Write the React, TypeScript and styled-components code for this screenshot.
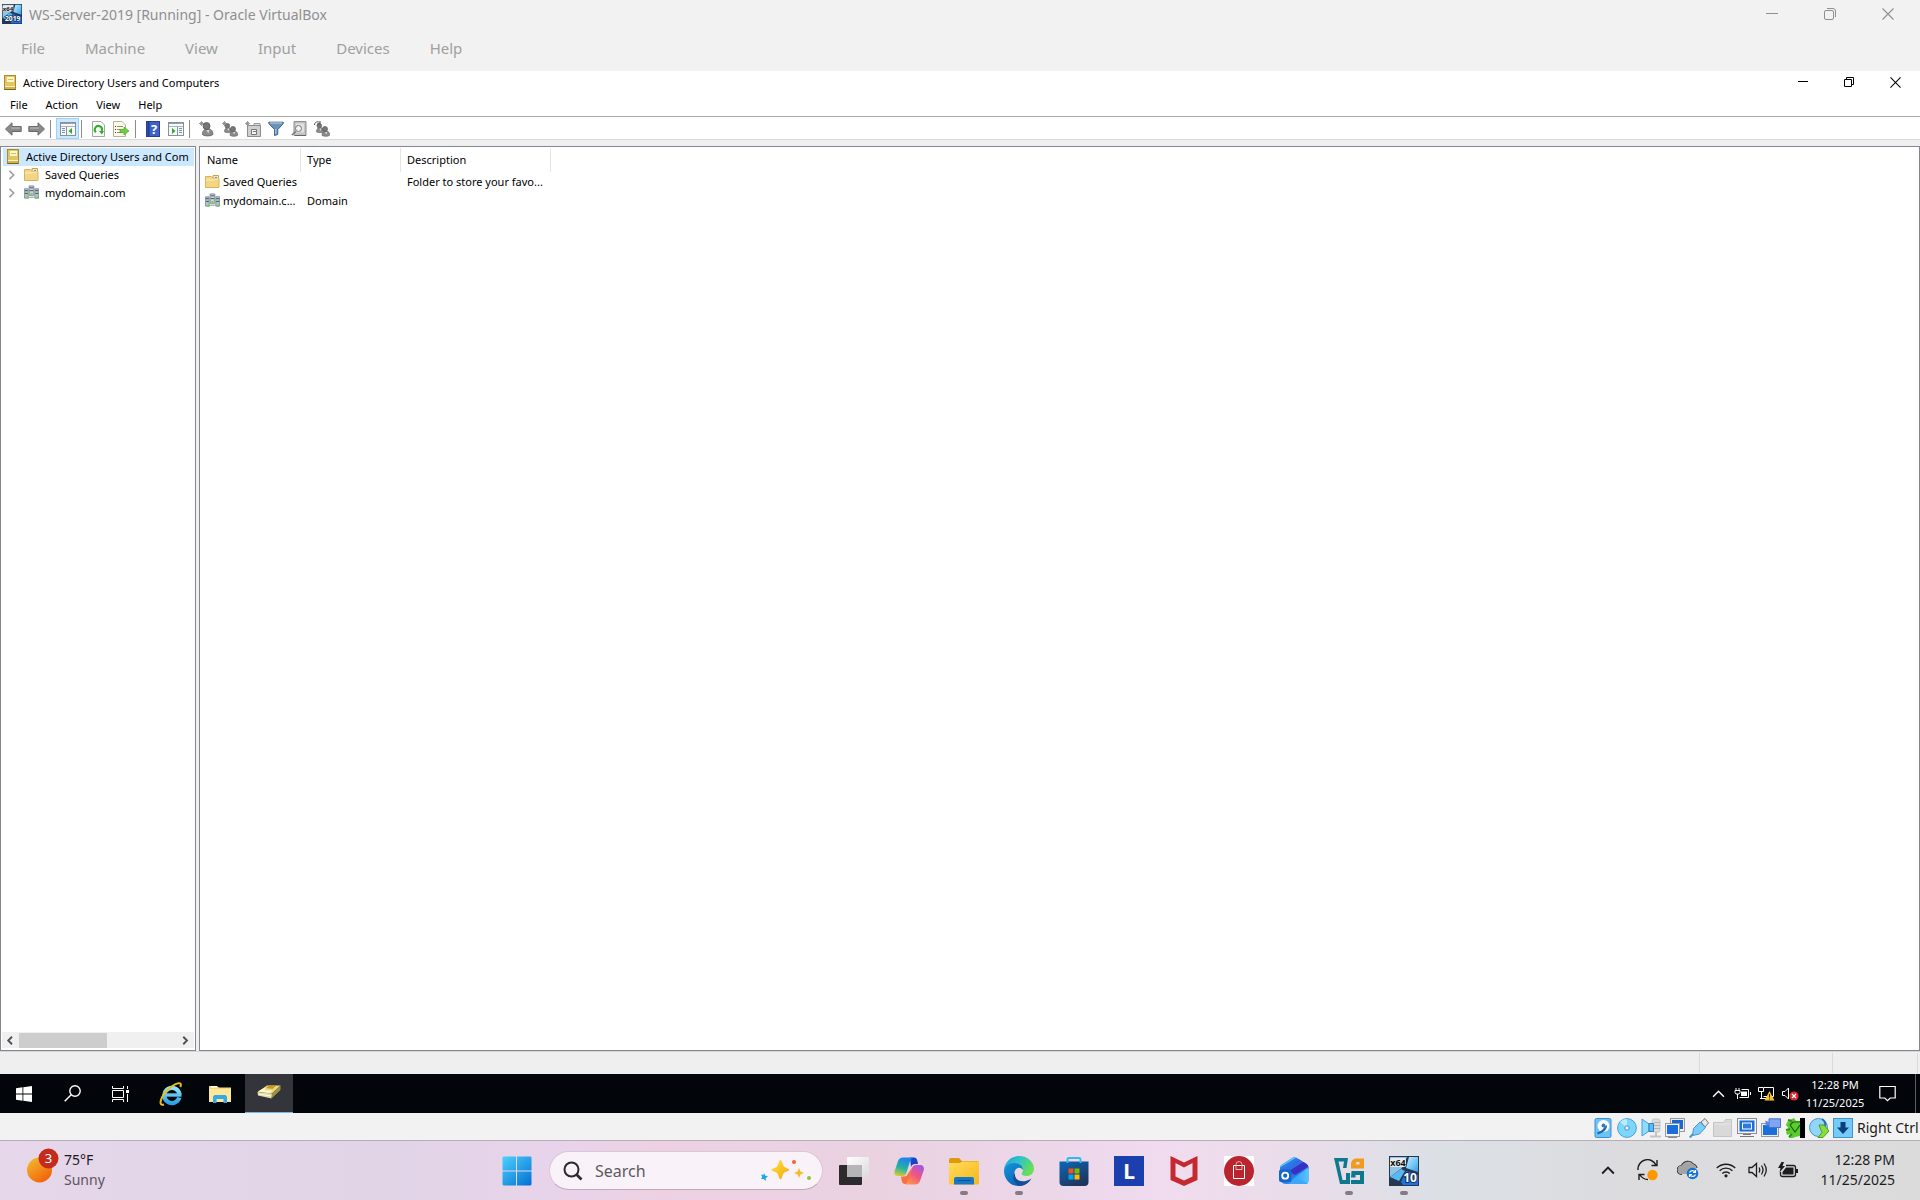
import React from "react";
import styled, { createGlobalStyle, css } from "styled-components";

const Global = createGlobalStyle`
  *, *::before, *::after { box-sizing: border-box; }
  html, body { margin: 0; padding: 0; }
  body { font-family: "Noto Sans", "Open Sans", sans-serif; overflow: hidden; }
  button, input { font: inherit; color: inherit; margin: 0; }
  button { border: 0; background: none; padding: 0; cursor: default; white-space: nowrap; }
  svg { display: block; flex: none; }
`;

/* ---------- layout ---------- */

const Desktop = styled.div`
  display: flex;
  flex-direction: column;
  min-height: 100vh;
  background: #f2f2f2;
`;

const HostTitleBar = styled.header`
  display: flex;
  align-items: center;
  height: 28px;
  padding: 0 3px 0 2px;
  color: #8f8f8f;
`;

const HostTitle = styled.h1`
  flex: 1;
  margin: 0 0 0 7px;
  font-size: 14px;
  font-weight: 400;
`;

const HostMenu = styled.nav`
  display: flex;
  height: 43px;
  padding: 0 0 3px 1px;
  color: #a0a0a0;
  font-size: 15px;
`;

const MenuButton = styled.button<{ $pad: number }>`
  padding: 0 ${(p) => p.$pad}px;
`;

const WindowButton = styled.button<{ $width: number }>`
  display: flex;
  align-items: center;
  justify-content: center;
  width: ${(p) => p.$width}px;
  height: 100%;
`;

const Console = styled.main`
  flex: 1;
  display: flex;
  flex-direction: column;
  background: #efefef;
  color: #000;
  font-size: 11px;
`;

const ConsoleTitleBar = styled.header`
  display: flex;
  align-items: center;
  height: 24px;
  padding: 0 2px 2px 4px;
  background: #fff;
`;

const ConsoleTitle = styled.h2`
  flex: 1;
  margin: 0 0 0 7px;
  font-size: 11px;
  font-weight: 400;
`;

const ConsoleMenu = styled.nav`
  display: flex;
  height: 22px;
  padding: 0 0 2px 1px;
  background: #fff;
  border-bottom: 1px solid #a9a9a9;
`;

const Toolbar = styled.div`
  display: flex;
  align-items: flex-end;
  height: 23px;
  padding-left: 2px;
  background: #fff;
  border-bottom: 1px solid #dadada;
`;

const ToolButton = styled.button<{ $active?: boolean }>`
  display: flex;
  align-items: center;
  justify-content: center;
  width: 23px;
  height: 21px;
  ${(p) =>
    p.$active &&
    css`
      background: #cce8ff;
      box-shadow: inset 0 0 0 1px #99d1ff;
    `}
`;

const ToolSeparator = styled.span`
  width: 1px;
  height: 18px;
  margin: 0 5px 1px 2px;
  background: #8c8c8c;
`;

const Workspace = styled.div`
  flex: 1;
  display: flex;
  gap: 3px;
  padding-top: 6px;
`;

const TreePane = styled.section`
  display: flex;
  flex-direction: column;
  width: 196px;
  padding: 1px 1px 2px;
  background: #fff;
  border: 1px solid #828790;
`;

const Tree = styled.ul`
  flex: 1;
  margin: 0;
  padding: 0 0 0 1px;
  list-style: none;
`;

const TreeRow = styled.li<{ $selected?: boolean }>`
  display: flex;
  align-items: center;
  height: 18px;
  padding: 0 0 2px 4px;
  white-space: nowrap;
  background: ${(p) => (p.$selected ? "#cce8ff" : "transparent")};
`;

const TreeToggle = styled.button`
  width: 10px;
  margin-right: 7px;
  padding-top: 2px;
  color: #a0a0a0;
`;

const TreeLabel = styled.span<{ $root?: boolean }>`
  margin-left: ${(p) => (p.$root ? 7 : 6)}px;
`;

const ScrollBar = styled.div`
  display: flex;
  align-items: center;
  height: 16px;
  background: #f0f0f0;
  color: #505050;
`;

const ScrollArrow = styled.button`
  display: flex;
  align-items: center;
  justify-content: center;
  width: 17px;
  height: 16px;
`;

const ScrollTrack = styled.div`
  flex: 1;
  height: 15px;
`;

const ScrollThumb = styled.div`
  width: 56%;
  height: 100%;
  background: #cdcdcd;
`;

const ListPane = styled.section`
  flex: 1;
  padding: 1px;
  background: #fff;
  border: 1px solid #828790;
`;

const Table = styled.table`
  width: 350px;
  table-layout: fixed;
  border-collapse: separate;
  border-spacing: 0;
`;

const Col = styled.col<{ $width: number }>`
  width: ${(p) => p.$width}px;
`;

const HeadCell = styled.th`
  height: 24px;
  padding: 0 0 2px 6px;
  border-right: 1px solid #e5e5e5;
  font-weight: 400;
  text-align: left;
`;

const Cell = styled.td`
  height: 19px;
  padding: 0 0 0 6px;
  white-space: nowrap;
`;

const NameCell = styled(Cell)`
  padding-left: 4px;
`;

const NameWrap = styled.span`
  display: flex;
  align-items: center;
  gap: 3px;
`;

const ConsoleStatus = styled.footer`
  display: flex;
  justify-content: flex-end;
  height: 23px;
  padding: 1px 2px 1px 0;
  border-top: 1px solid #d7d7d7;
`;

const StatusCell = styled.span<{ $width: number }>`
  width: ${(p) => p.$width}px;
  border-left: 1px solid #d9d9d9;
`;

const StatusEnd = styled.span`
  width: 1px;
  background: #d9d9d9;
`;

/* ---------- guest taskbar ---------- */

const GuestTaskbar = styled.div`
  display: flex;
  height: 39px;
  background: #02050a;
  color: #fff;
`;

const GuestApps = styled.div`
  display: flex;
  gap: 1px;
  margin-left: 3px;
  flex: 1;
`;

const GuestButton = styled.button<{ $active?: boolean }>`
  display: flex;
  align-items: center;
  justify-content: center;
  width: 48px;
  height: 39px;
  background: ${(p) => (p.$active ? "#33353a" : "transparent")};
  border-bottom: ${(p) => (p.$active ? "1px solid #76b9ed" : "0")};
`;

const GuestTray = styled.div`
  display: flex;
  align-items: center;
  padding-right: 4px;
`;

const TrayButton = styled.button<{ $width: number }>`
  display: flex;
  align-items: center;
  justify-content: center;
  width: ${(p) => p.$width}px;
  height: 100%;
`;

const GuestClock = styled.time`
  width: 66px;
  font-size: 11px;
  line-height: 18px;
  text-align: center;
  white-space: nowrap;
`;

const ShowDesktop = styled.button`
  width: 1px;
  height: 100%;
  margin-left: 8px;
  background: #5c5d60;
`;

/* ---------- VirtualBox status ---------- */

const HostStatus = styled.footer`
  display: flex;
  align-items: center;
  justify-content: flex-end;
  gap: 4px;
  height: 27px;
  padding: 2px 2px 0 0;
  color: #1a1a1a;
  font-size: 14px;
`;

const HostKey = styled.span`
  width: 61px;
  white-space: nowrap;
`;

/* ---------- host taskbar ---------- */

const HostTaskbar = styled.div`
  display: grid;
  grid-template-columns: 1fr auto 1fr;
  height: 60px;
  border-top: 1px solid #b5adb8;
  color: #1c1c1c;
  font-size: 14px;
  background: linear-gradient(
    90deg,
    #e6d7ea 0%,
    #e1d4e7 20%,
    #e8d4ea 29%,
    #edd1e3 34%,
    #ead2e1 46%,
    #ecd8ea 56%,
    #f0dcee 61%,
    #e9dde9 68%,
    #dbe0e5 75%,
    #dcdbde 86%,
    #dbdbdc 100%
  );
`;

const Weather = styled.button`
  display: flex;
  align-items: center;
  gap: 5px;
  height: 56px;
  padding-left: 26px;
  text-align: left;
  line-height: 20px;
`;

const WeatherText = styled.span`
  display: flex;
  flex-direction: column;
  padding-top: 1px;
`;

const Muted = styled.span`
  color: #5c5560;
`;

const HostApps = styled.div`
  display: flex;
`;

const AppButton = styled.button<{ $running?: boolean }>`
  display: flex;
  align-items: center;
  justify-content: center;
  flex-direction: column;
  gap: 5px;
  width: 55px;
  height: 57px;
  padding-top: 11px;

  &::after {
    content: "";
    width: 8px;
    height: 4px;
    border-radius: 2px;
    background: ${(p) => (p.$running ? "#857b84" : "transparent")};
  }
`;

const SearchBox = styled.label`
  display: flex;
  align-items: center;
  width: 274px;
  height: 39px;
  margin: 10px 3px 0 5px;
  padding: 0 10px 0 13px;
  border: 1px solid #d9c6d6;
  border-bottom-color: #bda9ba;
  border-radius: 20px;
  background: #f9f2f8;
`;

const SearchInput = styled.input`
  flex: 1;
  min-width: 0;
  margin-left: 12px;
  padding: 0;
  border: 0;
  outline: 0;
  background: transparent;
  font-size: 16px;

  &::placeholder {
    color: #5d5960;
    opacity: 1;
  }
`;

const HostTray = styled.div`
  display: flex;
  align-items: center;
  justify-content: flex-end;
  height: 58px;
  padding-right: 25px;
`;

const HostClock = styled.time`
  width: 91px;
  font-size: 14px;
  line-height: 20px;
  text-align: right;
  white-space: nowrap;
`;

/* ---------- icons ---------- */

const Minimize = ({ size }: { size: number }) => (
  <svg width={size} height="12" viewBox={`0 0 ${size} 12`} aria-hidden="true">
    <path d={`M0 5.5H${size}`} stroke="currentColor" />
  </svg>
);

const Restore = ({ rounded }: { rounded?: boolean }) => (
  <svg width="12" height="12" viewBox="0 0 12 12" fill="none" stroke="currentColor" aria-hidden="true">
    {rounded ? (
      <>
        <rect x=".5" y="2.5" width="9" height="9" rx="1.5" />
        <path d="M3 .5h6a2.500 2.500 0 0 1 2.500 2.500v6" />
      </>
    ) : (
      <path d="M1.500 3.500h7v7h-7zM3.500 3.500v-2h7v7h-2" />
    )}
  </svg>
);

const Close = ({ size }: { size: number }) => (
  <svg width={size} height={size} viewBox="0 0 12 12" fill="none" stroke="currentColor" strokeWidth="1.100" aria-hidden="true">
    <path d="M.5.5l11 11M11.500.5l-11 11" />
  </svg>
);

const VmIcon = ({ size, top, bottom }: { size: number; top: string; bottom: string }) => (
  <svg width={size} height={size} viewBox="0 0 30 30" aria-hidden="true">
    <defs>
      <linearGradient id={`vm${size}`} x1="0" y1="0" x2="1" y2="1">
        <stop offset="0" stopColor="#c9ecfb" />
        <stop offset=".6" stopColor="#6cc4f5" />
        <stop offset="1" stopColor="#3a97ea" />
      </linearGradient>
    </defs>
    <rect width="30" height="30" fill="#26384f" />
    <path d="M1 1h17l-5 11-12 9z" fill="#8fc4e6" />
    <path d="M20 1h9v15l-12-4z" fill={`url(#vm${size})`} />
    <path d="M12 13l4 2-6 10-9-4z" fill="#58b8f0" />
    <path d="M17 15l12 4v10H14l-2-3z" fill="#1c72e4" />
    <rect x="1" y="2" width="16" height="9" rx="2" fill="#e9ecec" />
    <text x="9" y="10" textAnchor="middle" fontSize="9" fontWeight="700" fill="#111">{top}</text>
    <text x={bottom.length > 2 ? 16 : 21} y="26" textAnchor="middle" fontSize={bottom.length > 2 ? 10 : 12} fontWeight="700" fill="#fff" stroke="#17335e" strokeWidth="2" paintOrder="stroke">{bottom}</text>
  </svg>
);

const BookIcon = ({ w, h }: { w: number; h: number }) => (
  <svg width={w} height={h} viewBox="0 0 12 15" aria-hidden="true">
    <rect x=".5" y=".5" width="11" height="14" fill="#d3b44c" stroke="#ab8a30" />
    <path d="M1 1h10v10H1z" fill="#e2c664" />
    <rect x="3" y="2" width="7" height="5" fill="#fff8cf" />
    <path d="M4 4.500h5" stroke="#d6bc62" />
    <path d="M1 11.500h10" stroke="#fff3bf" />
    <path d="M.5 14.500h11" stroke="#7d6118" />
  </svg>
);

const FolderIcon = () => (
  <svg width="15" height="13" viewBox="0 0 15 13" aria-hidden="true">
    <path d="M8 .5h5.500v4H8z" fill="#fbe9ae" stroke="#c8a04c" />
    <path d="M.5 1.500h6l2 2h5.500v9H.5z" fill="#f4d583" stroke="#d9b25c" />
    <path d="M1 5h7l1.500-1h4" stroke="#fdf0c4" fill="none" />
    <path d="M10 2.500h2" stroke="#5b9ad5" />
  </svg>
);

const DomainIcon = () => (
  <svg width="15" height="15" viewBox="0 0 16 15" aria-hidden="true">
    <path d="M5.500.5h5v10h-5z" fill="#c9d3d8" stroke="#7b8c96" />
    <path d="M.5 3.500h4v10h-4zM11.500 3.500h4v10h-4z" fill="#b4c1c8" stroke="#8494a0" />
    <path d="M6 2.500h4M6 5.500h4M1 5.500h3M1 8.500h3M12 5.500h3M12 8.500h3" stroke="#425462" />
    <path d="M3 12h2v2H3zM13 12h2v2h-2zM7 8h2v2H7z" fill="#5ee01d" />
    <path d="M5.500 12.500h5" stroke="#7b8c96" />
  </svg>
);

const Arrow = ({ flip }: { flip?: boolean }) => (
  <svg width="17" height="14" viewBox="0 0 17 14" aria-hidden="true">
    <path
      d={flip ? "M16.500 7L10 .8v3.700H.8v5H10v3.700z" : "M.5 7L7 .8v3.700h9.200v5H7v3.700z"}
      fill="#8b8b8b"
      stroke="#686868"
    />
    <path d={flip ? "M2 6h9" : "M6 6h9"} stroke="#bdbdbd" />
  </svg>
);

const PaneIcon = ({ side }: { side: "left" | "right" }) => (
  <svg width="16" height="14" viewBox="0 0 16 14" aria-hidden="true">
    <rect x=".5" y=".5" width="15" height="13" fill="#f7f8f9" stroke="#87919c" />
    <path d="M1 1.500h14" stroke="#8e9baa" />
    <path d="M1 4.500h14M11 1.500h1M13 1.500h1" stroke="#a9b4c0" />
    {side === "left" ? (
      <>
        <path d="M6.500 5v8" stroke="#87919c" />
        <path d="M2 6.500h3M2 8.500h3M2 10.500h3" stroke="#6f94bd" />
        <path d="M12 6v6L8.500 9z" fill="#33a92c" />
      </>
    ) : (
      <>
        <path d="M9.500 5v8" stroke="#87919c" />
        <path d="M11 6.500h3M11 8.500h3M11 10.500h3" stroke="#6f94bd" />
        <path d="M4 6v6l3.500-3z" fill="#33a92c" />
      </>
    )}
  </svg>
);

const RefreshIcon = () => (
  <svg width="13" height="16" viewBox="0 0 13 16" fill="none" aria-hidden="true">
    <path d="M.5.5H9L12.500 4v11.500H.5z" fill="#fafafa" stroke="#a5a5a5" />
    <path d="M9.700 10A3.600 3.600 0 1 0 4 11.300" stroke="#2fae2b" strokeWidth="2" />
    <path d="M7 10h5l-2.200 3.500z" fill="#2fae2b" />
  </svg>
);

const ExportIcon = () => (
  <svg width="17" height="16" viewBox="0 0 17 16" aria-hidden="true">
    <path d="M.5.5H9L12.500 4v11.500H.5z" fill="#fffbe4" stroke="#b3b09c" />
    <path d="M2 5.500h1M2 8.500h1M2 11.500h1" stroke="#333" />
    <path d="M4 5.500h6M4 8.500h4M4 11.500h5" stroke="#8c8c80" />
    <path d="M7 8.500h4V6l5 4-5 4v-2.500H7z" fill="#6cd13f" stroke="#3ba31f" strokeWidth=".6" />
  </svg>
);

const HelpIcon = () => (
  <svg width="14" height="16" viewBox="0 0 14 16" overflow="visible" aria-hidden="true">
    <rect x=".5" y=".5" width="13" height="15" fill="#3f62c8" stroke="#27408f" />
    <path d="M2.500 1v14" stroke="#243c8c" strokeWidth="2" />
    <text x="8" y="13" textAnchor="middle" fontSize="13" fontWeight="700" fill="#fff">?</text>
  </svg>
);

const Person = ({ x, y, s = 1 }: { x: number; y: number; s?: number }) => (
  <g transform={`translate(${x} ${y}) scale(${s})`}>
    <path d="M0 11c0-4 2-5 4.500-5S9 7 9 11c-2 1.500-7 1.500-9 0z" fill="#8b8b8b" stroke="#6a6a6a" strokeWidth=".8" />
    <circle cx="3.500" cy="3.500" r="3" fill="#777" stroke="#5a5a5a" strokeWidth=".8" />
    <path d="M3.500 7l1.500 3 1-3z" fill="#ddd" />
  </g>
);

const Spark = () => <path d="M2.500 0v5M0 2.500h5M1 1l3.500 3.500M4 1L1 4" stroke="#888" strokeWidth=".8" />;

const UserIcon = () => (
  <svg width="16" height="16" viewBox="0 0 16 16" aria-hidden="true">
    <Person x={3.500} y={1} s={1.150} />
    <Spark />
  </svg>
);

const GroupIcon = ({ add }: { add?: boolean }) => (
  <svg width="16" height="16" viewBox="0 0 16 16" fill="none" aria-hidden="true">
    <Person x={2.500} y={2} s={0.800} />
    <Person x={8} y={5} s={0.850} />
    {add ? <path d="M.5 4c0-3 3-4 5-2.500M6 0v3H3" stroke="#555" /> : <Spark />}
  </svg>
);

const UnitIcon = () => (
  <svg width="16" height="16" viewBox="0 0 16 16" aria-hidden="true">
    <path d="M9 2.500h6v3H9z" fill="#ddd" stroke="#999" />
    <path d="M2.500 4.500h13v11h-13z" fill="#cfcfcf" stroke="#8d8d8d" />
    <path d="M6.500 8.500h5v5h-5z" fill="#f4f4f4" stroke="#777" />
    <path d="M8 10.500h3" stroke="#777" />
    <Spark />
  </svg>
);

const FilterIcon = () => (
  <svg width="16" height="15" viewBox="0 0 16 15" aria-hidden="true">
    <path d="M.8 1.200h14.400v1.500L9.800 8.500v5L6.500 14.500v-6L.8 2.700z" fill="#6a93b8" stroke="#41678a" />
    <path d="M2 2h12" stroke="#bfd6e8" />
    <path d="M7.800 8v5" stroke="#b9d2e6" />
  </svg>
);

const FindIcon = () => (
  <svg width="16" height="16" viewBox="0 0 16 16" fill="none" aria-hidden="true">
    <path d="M3 .5h12v14H3z" fill="#c4c4c4" stroke="#8e8e8e" />
    <path d="M5 2.500h8v9H5z" fill="#e2e2e2" />
    <circle cx="7.500" cy="7.500" r="3" fill="#f2f2f2" stroke="#777" />
    <path d="M5 10.500L.8 14" stroke="#777" strokeWidth="1.600" />
    <path d="M4 14.500h11" stroke="#666" />
  </svg>
);

const Chevron = ({ dir, size = 9, width = 1.500 }: { dir: "left" | "right" | "up"; size?: number; width?: number }) => {
  const d = { left: "M8 1L3 6l5 5", right: "M3 1l5 5-5 5", up: "M1 9l5-5 5 5" }[dir];
  return (
    <svg width={size} height={size} viewBox="0 0 12 12" fill="none" stroke="currentColor" strokeWidth={width} aria-hidden="true">
      <path d={d} />
    </svg>
  );
};

const WinLogo = () => (
  <svg width="16" height="16" viewBox="0 0 16 16" fill="#fff" aria-hidden="true">
    <path d="M0 2.300L6.500 1.300V7.500H0zM7.300 1.200L16 0v7.500H7.300zM0 8.400h6.500v6.300L0 13.800zM7.300 8.400H16V16l-8.700-1.200z" />
  </svg>
);

const GuestSearch = () => (
  <svg width="17" height="17" viewBox="0 0 17 17" fill="none" stroke="#fff" strokeWidth="1.400" aria-hidden="true">
    <circle cx="11" cy="6" r="5.200" />
    <path d="M7.200 9.800L.7 16.300" />
  </svg>
);

const TaskView = () => (
  <svg width="17" height="16" viewBox="0 0 17 16" fill="none" stroke="#fff" aria-hidden="true">
    <path d="M.5 0v2.500h11V0M.5 16v-2.500h11V16M.5 4.500h11v7H.5zM15.500 0v3M15.500 8v8" />
    <path d="M14 4h3v3h-3z" fill="#fff" stroke="none" />
  </svg>
);

const IeIcon = () => (
  <svg width="24" height="24" viewBox="0 0 24 24" fill="none" aria-hidden="true">
    <defs>
      <linearGradient id="ie" x1="0" y1="0" x2="0" y2="1">
        <stop offset="0" stopColor="#8fe3fb" />
        <stop offset="1" stopColor="#2aa3e6" />
      </linearGradient>
    </defs>
    <path d="M20.300 15.500A7.600 7.600 0 1 1 20.500 12.500" stroke="url(#ie)" strokeWidth="4.200" />
    <path d="M7 13h15.500" stroke="#5cc8f3" strokeWidth="3.400" />
    <path d="M5 22.500C-1.500 24.500 2 14 9 7.500S24-1.500 21.300 5" stroke="#eebc1d" strokeWidth="2" />
  </svg>
);

const GuestExplorer = () => (
  <svg width="22" height="18" viewBox="0 0 22 18" aria-hidden="true">
    <path d="M0 1h8l2 1.500h12V17H0z" fill="#f8d775" />
    <path d="M0 4h22v13H0z" fill="#fde79b" />
    <path d="M2 1h6v1.500H2z" fill="#fff" />
    <path d="M4 18v-6.500L5.500 10h11l1.500 1.500V18h-3.500v-4h-7v4z" fill="#35a8e6" />
  </svg>
);

const ConsoleApp = () => (
  <svg width="24" height="18" viewBox="0 0 24 18" aria-hidden="true">
    <path d="M.5 8L10 1.500h13.500L15 9.500z" fill="#e6d77a" />
    <path d="M9 4l3-2.500h7L15.500 5z" fill="#c39a24" />
    <path d="M1 7.500L9 3l-1.500 3 8 .5-2.500 2.500z" fill="#fff9ce" />
    <path d="M.5 8L15 9.500l-.5 5L1 11.500z" fill="#e3dba6" />
    <path d="M15 9.500L23.500 1.500v4.500L14.500 14.500z" fill="#9c9047" />
    <path d="M1.500 10l13 2" stroke="#fffceb" />
  </svg>
);

const GuestPower = () => (
  <svg width="17" height="13" viewBox="0 0 17 13" fill="none" stroke="#fff" aria-hidden="true">
    <path d="M7.500 2.500h7v8H5.500" />
    <path d="M7 4.500h6v4.500H7z" fill="#fff" stroke="none" />
    <path d="M16.500 5v3M2 1v2M5 1v2M1 3.500h5v2L5 7H2L1 5.500zM3.500 7v5" />
  </svg>
);

const GuestNetwork = () => (
  <svg width="17" height="15" viewBox="0 0 17 15" fill="none" stroke="#fff" aria-hidden="true">
    <path d="M6 1.500h9.500v9H5.500M.5 1.500h5v4h-5zM3.500 6v6M2 12.500h7" />
    <path d="M11.500 5L16.500 14.500h-10z" fill="#f7c52b" stroke="none" />
    <path d="M11.500 8v3.500M11.500 12.500v1" stroke="#222" />
  </svg>
);

const GuestSound = () => (
  <svg width="17" height="15" viewBox="0 0 17 15" fill="none" aria-hidden="true">
    <path d="M.5 5.500H3L6.500 2v11L3 9.500H.5z" stroke="#fff" />
    <circle cx="12" cy="10" r="4.600" fill="#d9252e" />
    <path d="M10 8l4 4M14 8l-4 4" stroke="#fff" strokeWidth="1.300" />
  </svg>
);

const ActionCenter = () => (
  <svg width="17" height="17" viewBox="0 0 17 17" fill="none" stroke="#fff" strokeWidth="1.200" aria-hidden="true">
    <path d="M.8 1.500h15.400v11.500h-5L8.500 15.700 5.800 13h-5z" />
  </svg>
);

/* VirtualBox device indicators, in bar order */
const deviceDrawings: { label: string; art: React.ReactNode }[] = [
  {
    label: "Hard disks",
    art: (
      <>
        <rect x="2" y=".5" width="16" height="19" rx="1.500" fill="#6cc4f5" stroke="#3a8fd0" />
        <circle cx="10.500" cy="8" r="6" fill="#fff" />
        <circle cx="10.500" cy="7.500" r="2" fill="#2f7cc4" />
        <path d="M14 7c0 5-3 7-9 9.500l-1-2c4-1 6-3 8-6z" fill="#1c66b4" />
      </>
    ),
  },
  {
    label: "Optical drives",
    art: (
      <>
        <circle cx="10" cy="10" r="9.400" fill="#7bd7fb" stroke="#4c9fd3" />
        <path d="M10 10L3 4a9 9 0 0 1 7-3z" fill="#b5ecff" />
        <circle cx="10" cy="10" r="2.200" fill="#e9f8ff" stroke="#4c86b9" />
      </>
    ),
  },
  {
    label: "Audio",
    art: (
      <>
        <path d="M11 3q0-2 2-2h4q2 0 2 2v9q0 2-2 2h-4q-2 0-2-2z" fill="#dcdcdc" stroke="#c4c4c4" />
        <path d="M9 18.500h11M15 14v4" stroke="#c4c4c4" strokeWidth="2" />
        <path d="M13 4.500h6M13 7.500h6M13 10.500h6" stroke="#b4b4b4" />
        <path d="M1 1l7 5v7l-7 5z" fill="#8fdcfb" stroke="#4a9cd6" />
        <path d="M8 5.500h4.500v8H8z" fill="#5cbcf3" stroke="#2b7fc4" />
      </>
    ),
  },
  {
    label: "Network",
    art: (
      <>
        <rect x="5.500" y=".5" width="14" height="13" fill="#eee" stroke="#9a9a9a" />
        <rect x="7" y="2" width="11" height="9" fill="#1768d2" />
        <rect x=".5" y="5.500" width="14" height="13" fill="#f3f3f3" stroke="#9a9a9a" />
        <rect x="2" y="7" width="11" height="9" fill="#1a6fdc" />
        <path d="M3 19.500h9" stroke="#8a8a8a" />
      </>
    ),
  },
  {
    label: "USB",
    art: (
      <>
        <path d="M12 4l4-3.500L19.500 5 16 9z" fill="#e8e8e8" stroke="#777" />
        <path d="M11 4l5.500 5.500-6 6.500-7 1.500 1-7z" fill="#79cdf8" stroke="#4795cd" />
        <path d="M4 16L.8 19.500" stroke="#4795cd" strokeWidth="2" />
      </>
    ),
  },
  {
    label: "Shared folders",
    art: (
      <>
        <path d="M.5 4.500h10l2-3h6v17H.5z" fill="#d9d9d9" stroke="#c4c4c4" />
        <path d="M1 6h17" stroke="#e6e6e6" />
      </>
    ),
  },
  {
    label: "Display",
    art: (
      <>
        <rect x=".5" y=".5" width="19" height="15" fill="#f4f4f4" stroke="#8f8f8f" />
        <rect x="2.500" y="2.500" width="15" height="11" fill="#1a6fdc" />
        <rect x="5.500" y="5" width="9" height="6" fill="#2b7be0" stroke="#fff" />
        <path d="M3 18.500h14M6 16.500h8" stroke="#777" />
      </>
    ),
  },
  {
    label: "Recording",
    art: (
      <>
        <rect x=".5" y="5.500" width="17" height="13" fill="#eee" stroke="#999" />
        <rect x="2" y="7" width="14" height="10" fill="#1a6fdc" />
        <path d="M8 .8h11.500v8.700H8z" fill="#7ea6f4" stroke="#4872c8" />
        <path d="M4.500 2.500L8 4v3L4.500 8z" fill="#5c87e2" />
      </>
    ),
  },
  {
    label: "CPU",
    art: (
      <>
        <rect x="15" width="5" height="20" fill="#000" />
        <path d="M1 7q1-4 4-5l4-2 2 3h4v15l-5 1-2 1H4l1-4-3 1-1-3 3-3z" fill="#5ccc2c" />
        <path d="M3 2l4 1M1 12l4-1M4 19l3-3" stroke="#2f8f1c" strokeWidth="2" />
        <path d="M5 7l5 7 5-7M8 4h7M5 7l3-3" stroke="#14620c" strokeWidth="1.200" fill="none" />
      </>
    ),
  },
  {
    label: "Mouse integration",
    art: (
      <>
        <circle cx="9.500" cy="9.500" r="9" fill="#8fd6f8" stroke="#4795cd" />
        <path d="M13 1c3 2 4 4 3 7" stroke="#2a6dab" strokeWidth="2" fill="none" />
        <path d="M10 7h5l5 6-6 6.500H9l4-5z" fill="#8bdd3c" stroke="#4e9d1c" />
      </>
    ),
  },
  {
    label: "Keyboard capture",
    art: (
      <>
        <rect x=".5" y=".5" width="19" height="19" fill="#74cbf8" stroke="#4393cc" />
        <path d="M7.500 4h5v5.500H16L10 16 4 9.500h3.500z" fill="#0d3f7c" />
      </>
    ),
  },
];

const DeviceIcon = ({ index }: { index: number }) => (
  <svg width="20" height="20" viewBox="0 0 20 20" role="img" aria-label={deviceDrawings[index].label}>
    {deviceDrawings[index].art}
  </svg>
);

const WeatherIcon = () => (
  <svg width="33" height="42" viewBox="0 0 33 42" aria-hidden="true">
    <defs>
      <linearGradient id="sun" x1="0" y1="0" x2=".7" y2="1">
        <stop offset="0" stopColor="#f2c231" />
        <stop offset="1" stopColor="#f2600a" />
      </linearGradient>
    </defs>
    <circle cx="13.500" cy="22" r="12.500" fill="url(#sun)" />
    <circle cx="22.500" cy="10.500" r="10" fill="#c42b1c" />
    <text x="22.500" y="15" textAnchor="middle" fontSize="13" fill="#fff">3</text>
  </svg>
);

const StartIcon = () => (
  <svg width="30" height="30" viewBox="0 0 30 30" aria-hidden="true">
    <defs>
      <linearGradient id="start" gradientUnits="userSpaceOnUse" x1="0" y1="0" x2="26" y2="30">
        <stop offset="0" stopColor="#4fd2ff" />
        <stop offset="1" stopColor="#0474d4" />
      </linearGradient>
    </defs>
    <path d="M1.500.5H14v14H.5v-13zM15 .5h13.500l1 1v13H15zM.5 15.500H14v14H1.500l-1-1zM15 15.500h14.500v13l-1 1H15z" fill="url(#start)" />
  </svg>
);

const SearchGlass = () => (
  <svg width="20" height="20" viewBox="0 0 20 20" fill="none" stroke="#2c2a2d" aria-hidden="true">
    <circle cx="8.500" cy="8.500" r="7" strokeWidth="2" />
    <path d="M13.500 13.500l5 5" strokeWidth="2.600" />
  </svg>
);

const Sparkles = () => (
  <svg width="52" height="24" viewBox="0 0 52 24" aria-hidden="true">
    <defs>
      <linearGradient id="gold" x1="0" y1="0" x2="1" y2="1">
        <stop offset="0" stopColor="#ffe23d" />
        <stop offset="1" stopColor="#f3a70d" />
      </linearGradient>
    </defs>
    <path d="M20.500 1q1 0 1.600 2l1.200 3.500q.7 1.500 2.200 2L28.500 10q1.500.8 0 1.800l-3.500 1.400q-1.500.6-2.100 2.200L21.800 19q-1.300 2.500-2.600 0L18 15.400q-.6-1.600-2.100-2.200L12 11.800q-1.500-1 0-1.800l3.500-1.500q1.600-.5 2.200-2L19 3q.5-2 1.500-2z" fill="url(#gold)" />
    <path d="M39 9l1.400 3.600L44 14l-3.600 1.400L39 19l-1.400-3.600L34 14l3.600-1.400z" fill="#f7bb22" />
    <path d="M4 14l1.300 2.700L8 17l-2 2-.5 3-1.800-2L1 20l1.200-2L1 15.500l2.500.5z" fill="#19a8ea" />
    <circle cx="34" cy="3" r="2" fill="#f0642d" />
    <circle cx="49" cy="19" r="2" fill="#8bc53f" />
  </svg>
);

const HostTaskView = () => (
  <svg width="30" height="30" viewBox="0 0 30 30" aria-hidden="true">
    <defs>
      <linearGradient id="tvw" x1="0" y1="0" x2="1" y2="1">
        <stop offset="0" stopColor="#fff" />
        <stop offset="1" stopColor="#dcdadc" />
      </linearGradient>
    </defs>
    <rect x="0" y="9" width="23" height="20" rx="1" fill="#2b2a2c" />
    <rect x="8" y="1" width="22" height="20" rx="1" fill="url(#tvw)" />
    <rect x="8" y="9" width="15" height="12" fill="#b5b4b6" />
  </svg>
);

const CopilotIcon = () => (
  <svg width="30" height="30" viewBox="0 0 30 30" aria-hidden="true">
    <defs>
      <linearGradient id="cpa" x1=".3" y1="0" x2="0" y2="1">
        <stop offset="0" stopColor="#1f86e8" />
        <stop offset=".5" stopColor="#27b3a0" />
        <stop offset="1" stopColor="#f0d21e" />
      </linearGradient>
      <linearGradient id="cpb" x1=".8" y1="0" x2=".2" y2="1">
        <stop offset="0" stopColor="#a755e8" />
        <stop offset=".5" stopColor="#f0567f" />
        <stop offset="1" stopColor="#fb9a4b" />
      </linearGradient>
    </defs>
    <path d="M16 1.500h4q2.500 0 3.300 3L24 8h-3q-3 0-4 3z" fill="#1944c9" />
    <path d="M14 28h-3q-2.500 0-3.200-3L7 20.500h3q3 0 4-3l4-6z" fill="#f9703f" />
    <path d="M9 1.500h10q-2 1-3 4l-3.500 11q-1 3.500-4 3.500H3.500Q0 20 .5 15.500L4 5q1.300-3.500 5-3.500z" fill="url(#cpa)" />
    <path d="M21 28.500H11q2-1 3-4l3.500-11q1-4.500 4.500-4.500h4.500q3.500 0 3.500 4.500L26 25q-1.300 3.500-5 3.500z" fill="url(#cpb)" />
  </svg>
);

const ExplorerIcon = () => (
  <svg width="30" height="30" viewBox="0 0 30 30" aria-hidden="true">
    <defs>
      <linearGradient id="fold" x1="0" y1="0" x2="1" y2="1">
        <stop offset="0" stopColor="#ffdc5e" />
        <stop offset="1" stopColor="#f8b617" />
      </linearGradient>
    </defs>
    <path d="M0 4q0-2 2-2h8l3 3h15q2 0 2 2v4H0z" fill="#dc9a0c" />
    <path d="M0 7h11l2-1.500h17V27q0 1.500-1.500 1.500h-27Q0 28.500 0 27z" fill="url(#fold)" />
    <path d="M5 28.500V23q0-2 2-2h16q2 0 2 2v5.500z" fill="#1478c4" />
    <path d="M9 24.500h12" stroke="#0a4f8c" strokeLinecap="round" />
  </svg>
);

const EdgeIcon = () => (
  <svg width="30" height="30" viewBox="0 0 30 30" aria-hidden="true">
    <defs>
      <linearGradient id="edt" x1="0" y1="0" x2="1" y2=".5">
        <stop offset="0" stopColor="#1f9fdf" />
        <stop offset=".5" stopColor="#2fc4c8" />
        <stop offset="1" stopColor="#6adf54" />
      </linearGradient>
      <linearGradient id="edb" x1="0" y1="0" x2=".6" y2="1">
        <stop offset="0" stopColor="#1595dc" />
        <stop offset="1" stopColor="#0c62b8" />
      </linearGradient>
    </defs>
    <path d="M0 14C1 5 8 0 15 0c9 0 15 6.500 15 12.500 0 5-3.500 7.500-7.500 7.500-3 0-5-1-5-2.200 0-1 1.500-1.300 1.500-3.800 0-3-3-5-7-5-5 0-9 2-12 5z" fill="url(#edt)" />
    <path d="M0 15c.5-5 5-8 10-8 5.500 0 9 3 9 7-1.500-2-3.500-2.500-5-2-3 1-4 4-3.500 7 .7 5 5 9 10 9-2 1.400-4 2-6 2C6 30 0 23 0 15z" fill="url(#edb)" />
    <path d="M11 17c-1 8 8 11 16.500 5.500C25 27 21 29.500 17 30 11 29 7 22 11 17z" fill="#124f96" />
  </svg>
);

const StoreIcon = () => (
  <svg width="30" height="30" viewBox="0 0 30 30" aria-hidden="true">
    <defs>
      <linearGradient id="store" x1="0" y1="0" x2=".6" y2="1">
        <stop offset="0" stopColor="#0c67b4" />
        <stop offset="1" stopColor="#1f3560" />
      </linearGradient>
    </defs>
    <path d="M.5 5.500h29V26q0 4-4 4h-21q-4 0-4-4z" fill="url(#store)" />
    <path d="M8.500 7V3.500Q8.500 2 10 2h10q1.500 0 1.500 1.500V7" fill="none" stroke="#29bdf2" strokeWidth="2" />
    <path d="M9.500 12.500h5v5h-5z" fill="#f25022" />
    <path d="M15.500 12.500h5v5h-5z" fill="#7fba00" />
    <path d="M9.500 18.500h5v5h-5z" fill="#00a4ef" />
    <path d="M15.500 18.500h5v5h-5z" fill="#ffb900" />
  </svg>
);

const LIcon = () => (
  <svg width="30" height="30" viewBox="0 0 30 30" overflow="visible" aria-hidden="true">
    <rect width="30" height="30" fill="#1b3fae" />
    <text x="15" y="23" textAnchor="middle" fontSize="21" fontWeight="700" fill="#fff">L</text>
  </svg>
);

const McAfeeIcon = () => (
  <svg width="30" height="30" viewBox="0 0 30 30" aria-hidden="true">
    <path d="M1.500 0L15 6.500 28.500 0v24L15 30 1.500 24zM6.500 7v13.500L15 24.500l8.500-4V7L15 11.500z" fill="#c5282f" fillRule="evenodd" />
  </svg>
);

const BagIcon = () => (
  <svg width="30" height="30" viewBox="0 0 30 30" fill="none" aria-hidden="true">
    <rect width="30" height="30" fill="#fff" />
    <circle cx="15" cy="15" r="15" fill="#b9242f" />
    <path d="M9.500 9.500h11v13h-11z" stroke="#fff" />
    <path d="M12 13.500V8.500a3 3 0 0 1 6 0v5zM12 13.500h6" stroke="#f3c9cc" strokeWidth=".8" />
  </svg>
);

const OutlookIcon = () => (
  <svg width="30" height="30" viewBox="0 0 30 30" aria-hidden="true">
    <defs>
      <linearGradient id="out" x1="0" y1="0" x2="1" y2="0">
        <stop offset="0" stopColor="#1f7ff0" />
        <stop offset="1" stopColor="#55c8ff" />
      </linearGradient>
      <clipPath id="outc">
        <path d="M1 12q0-2.500 2-3.500L13 2q2.500-1.500 5 0l9.500 6q2 1 2 3.500v13q0 3.500-3.500 3.500H8q-7 0-7-6z" />
      </clipPath>
    </defs>
    <g clipPath="url(#outc)">
      <rect width="30" height="30" fill="#2a7be6" />
      <path d="M0 12L20 0h-8L0 8z" fill="#5cc0fb" />
      <path d="M2 15L22 2l8 5v6L12 20z" fill="#2f6fe6" />
      <path d="M10 15L26 5l4 5-14 9z" fill="#3a2fc4" />
      <path d="M4 30L30 11v19z" fill="url(#out)" />
      <path d="M8 30l8-8 14 6v2z" fill="#3ba6fb" />
    </g>
    <rect x="0" y="13.500" width="12.500" height="12.500" rx="2" fill="#1566c8" />
    <circle cx="6.200" cy="19.700" r="3" fill="none" stroke="#fff" strokeWidth="1.800" />
  </svg>
);

const VboxIcon = () => (
  <svg width="30" height="30" viewBox="0 0 30 30" fill="none" strokeLinejoin="round" aria-hidden="true">
    <path d="M0 2h14l-1.500 10H9l1-6.500H4.500L8.500 24H12v-7h4v11H6z" fill="#10788c" />
    <path d="M17.500 15H30v13H17v-4h9v-5h-4.500v2.500H17z" fill="#10788c" />
    <path d="M17 12.500V7.500q1-5 5.500-5H30v10zM21.500 8.500h4V6h-3z" fill="#f29a1d" fillRule="evenodd" />
  </svg>
);

const SyncIcon = () => (
  <svg width="22" height="22" viewBox="0 0 22 22" fill="none" stroke="#1c1c1c" strokeWidth="1.400" aria-hidden="true">
    <path d="M1 11A9.500 9.500 0 0 1 19 6M20 1v5.500h-5.500M2 21v-5.500h5.500M3 16a9.500 9.500 0 0 0 8 4.500" />
    <circle cx="15.500" cy="16" r="5.200" fill="#ff9800" stroke="none" />
  </svg>
);

const CloudIcon = () => (
  <svg width="22" height="20" viewBox="0 0 22 20" fill="none" aria-hidden="true">
    <path d="M5 14.500a4.500 4.500 0 0 1-.5-9 7 7 0 0 1 12-1.500A5 5 0 0 1 20 8" stroke="#3b3b3b" strokeWidth="1.200" />
    <path d="M5 14a4 4 0 0 1 0-8.500 7 7 0 0 1 11-1c2 .3 3 2 3.500 4L10 14z" fill="#a3a3a3" />
    <circle cx="15.500" cy="13.500" r="5.800" fill="#1473d2" />
    <path d="M12.500 12.500c1-2.500 4.500-2.500 5.500-.5M18.500 10v2.500H16M18.500 14.500c-1 2.500-4.500 2.500-5.500.5M12.500 17v-2.500H15" stroke="#fff" strokeWidth="1.200" />
  </svg>
);

const WifiIcon = () => (
  <svg width="20" height="16" viewBox="0 0 20 16" fill="none" stroke="#1c1c1c" strokeWidth="1.400" aria-hidden="true">
    <path d="M.8 6a13 13 0 0 1 18.400 0M3.600 8.800a9 9 0 0 1 12.800 0M6.300 11.500a5.200 5.200 0 0 1 7.400 0" />
    <circle cx="10" cy="13.800" r="1.600" fill="#1c1c1c" stroke="none" />
  </svg>
);

const VolumeIcon = () => (
  <svg width="20" height="18" viewBox="0 0 20 18" fill="none" stroke="#1c1c1c" strokeWidth="1.300" aria-hidden="true">
    <path d="M1 6.500h3l4.500-4v13l-4.500-4H1zM11 6.500q1.500 2.500 0 5M13.500 4.500q3 4.500 0 9M16 2.500q4.500 6.500 0 13" />
  </svg>
);

const BatteryIcon = () => (
  <svg width="20" height="16" viewBox="0 0 20 16" fill="none" aria-hidden="true">
    <path d="M8 3.500h7.500q2 0 2 2v7q0 2-2 2h-11q-2 0-2-2V10" stroke="#1c1c1c" strokeWidth="1.300" />
    <path d="M8 5.500h7.500v7h-11V10z" fill="#1c1c1c" />
    <path d="M19 7v4" stroke="#1c1c1c" strokeWidth="2" />
    <path d="M3.500 0L0 6h2.500L1.500 10.500 7 4H4.500L6 0z" fill="#1c1c1c" />
  </svg>
);

/* ---------- page ---------- */

const hostMenus = ["File", "Machine", "View", "Input", "Devices", "Help"];
const consoleMenus = ["File", "Action", "View", "Help"];

const toolGroups: { label: string; icon: React.ReactNode; active?: boolean }[][] = [
  [
    { label: "Back", icon: <Arrow /> },
    { label: "Forward", icon: <Arrow flip /> },
  ],
  [{ label: "Show console tree", icon: <PaneIcon side="left" />, active: true }],
  [
    { label: "Refresh", icon: <RefreshIcon /> },
    { label: "Export list", icon: <ExportIcon /> },
  ],
  [
    { label: "Help topics", icon: <HelpIcon /> },
    { label: "Show action pane", icon: <PaneIcon side="right" /> },
  ],
  [
    { label: "New user", icon: <UserIcon /> },
    { label: "New group", icon: <GroupIcon /> },
    { label: "New organizational unit", icon: <UnitIcon /> },
    { label: "Filter", icon: <FilterIcon /> },
    { label: "Find objects", icon: <FindIcon /> },
    { label: "Add to group", icon: <GroupIcon add /> },
  ],
];

const rows = [
  { name: "Saved Queries", type: "", description: "Folder to store your favo...", icon: <FolderIcon /> },
  { name: "mydomain.c...", type: "Domain", description: "", icon: <DomainIcon /> },
];

const hostApps: { label: string; icon: React.ReactNode; running?: boolean }[] = [
  { label: "Task view", icon: <HostTaskView /> },
  { label: "Copilot", icon: <CopilotIcon /> },
  { label: "File Explorer", icon: <ExplorerIcon />, running: true },
  { label: "Edge", icon: <EdgeIcon />, running: true },
  { label: "Store", icon: <StoreIcon /> },
  { label: "L", icon: <LIcon /> },
  { label: "McAfee", icon: <McAfeeIcon /> },
  { label: "Shopping", icon: <BagIcon /> },
  { label: "Outlook", icon: <OutlookIcon /> },
  { label: "VirtualBox", icon: <VboxIcon />, running: true },
  { label: "Virtual machine", icon: <VmIcon size={30} top="x64" bottom="10" />, running: true },
];

const WindowControls = ({ width, rounded }: { width: number; rounded?: boolean }) => (
  <>
    <WindowButton $width={width} aria-label="Minimize"><Minimize size={rounded ? 12 : 10} /></WindowButton>
    <WindowButton $width={width} aria-label="Restore"><Restore rounded={rounded} /></WindowButton>
    <WindowButton $width={width} aria-label="Close"><Close size={rounded ? 12 : 11} /></WindowButton>
  </>
);

export default function App() {
  return (
    <Desktop>
      <Global />
      <HostTitleBar>
        <VmIcon size={20} top="x64" bottom="2019" />
        <HostTitle>WS-Server-2019 [Running] - Oracle VirtualBox</HostTitle>
        <WindowControls width={58} rounded />
      </HostTitleBar>
      <HostMenu>
        {hostMenus.map((m) => (
          <MenuButton key={m} $pad={20}>{m}</MenuButton>
        ))}
      </HostMenu>

      <Console>
        <ConsoleTitleBar>
          <BookIcon w={12} h={15} />
          <ConsoleTitle>Active Directory Users and Computers</ConsoleTitle>
          <WindowControls width={46} />
        </ConsoleTitleBar>
        <ConsoleMenu>
          {consoleMenus.map((m) => (
            <MenuButton key={m} $pad={9}>{m}</MenuButton>
          ))}
        </ConsoleMenu>
        <Toolbar>
          {toolGroups.map((group, i) => (
            <React.Fragment key={i}>
              {i > 0 && <ToolSeparator />}
              {group.map((t) => (
                <ToolButton key={t.label} aria-label={t.label} $active={t.active}>{t.icon}</ToolButton>
              ))}
            </React.Fragment>
          ))}
        </Toolbar>

        <Workspace>
          <TreePane>
            <Tree>
              <TreeRow $selected>
                <BookIcon w={12} h={15} />
                <TreeLabel $root>Active Directory Users and Com</TreeLabel>
              </TreeRow>
              <TreeRow>
                <TreeToggle aria-label="Expand Saved Queries"><Chevron dir="right" size={10} width={2} /></TreeToggle>
                <FolderIcon />
                <TreeLabel>Saved Queries</TreeLabel>
              </TreeRow>
              <TreeRow>
                <TreeToggle aria-label="Expand mydomain.com"><Chevron dir="right" size={10} width={2} /></TreeToggle>
                <DomainIcon />
                <TreeLabel>mydomain.com</TreeLabel>
              </TreeRow>
            </Tree>
            <ScrollBar>
              <ScrollArrow aria-label="Scroll left"><Chevron dir="left" size={9} width={2.500} /></ScrollArrow>
              <ScrollTrack><ScrollThumb /></ScrollTrack>
              <ScrollArrow aria-label="Scroll right"><Chevron dir="right" size={9} width={2.500} /></ScrollArrow>
            </ScrollBar>
          </TreePane>
          <ListPane>
            <Table>
              <colgroup>
                <Col $width={100} />
                <Col $width={100} />
                <Col $width={150} />
              </colgroup>
              <thead>
                <tr>
                  <HeadCell scope="col">Name</HeadCell>
                  <HeadCell scope="col">Type</HeadCell>
                  <HeadCell scope="col">Description</HeadCell>
                </tr>
              </thead>
              <tbody>
                {rows.map((r) => (
                  <tr key={r.name}>
                    <NameCell><NameWrap>{r.icon}{r.name}</NameWrap></NameCell>
                    <Cell>{r.type}</Cell>
                    <Cell>{r.description}</Cell>
                  </tr>
                ))}
              </tbody>
            </Table>
          </ListPane>
        </Workspace>
        <ConsoleStatus>
          <StatusCell $width={133} />
          <StatusCell $width={85} />
          <StatusEnd />
        </ConsoleStatus>
      </Console>

      <GuestTaskbar>
        <GuestButton aria-label="Start"><WinLogo /></GuestButton>
        <GuestButton aria-label="Search Windows"><GuestSearch /></GuestButton>
        <GuestButton aria-label="Task view"><TaskView /></GuestButton>
        <GuestApps>
          <GuestButton aria-label="Internet Explorer"><IeIcon /></GuestButton>
          <GuestButton aria-label="File Explorer"><GuestExplorer /></GuestButton>
          <GuestButton aria-label="Active Directory Users and Computers" $active><ConsoleApp /></GuestButton>
        </GuestApps>
        <GuestTray>
          <TrayButton $width={24} aria-label="Show hidden icons"><Chevron dir="up" size={13} width={1.300} /></TrayButton>
          <TrayButton $width={24} aria-label="Power"><GuestPower /></TrayButton>
          <TrayButton $width={24} aria-label="Network"><GuestNetwork /></TrayButton>
          <TrayButton $width={24} aria-label="Volume"><GuestSound /></TrayButton>
          <GuestClock>12:28 PM<br />11/25/2025</GuestClock>
          <TrayButton $width={39} aria-label="Notifications"><ActionCenter /></TrayButton>
          <ShowDesktop aria-label="Show desktop" />
        </GuestTray>
      </GuestTaskbar>

      <HostStatus>
        {deviceDrawings.map((d, i) => (
          <DeviceIcon key={d.label} index={i} />
        ))}
        <HostKey>Right Ctrl</HostKey>
      </HostStatus>

      <HostTaskbar>
        <Weather>
          <WeatherIcon />
          <WeatherText>
            <span>75°F</span>
            <Muted>Sunny</Muted>
          </WeatherText>
        </Weather>
        <HostApps>
          <AppButton aria-label="Start"><StartIcon /></AppButton>
          <SearchBox>
            <SearchGlass />
            <SearchInput type="text" placeholder="Search" aria-label="Search" />
            <Sparkles />
          </SearchBox>
          {hostApps.map((a) => (
            <AppButton key={a.label} aria-label={a.label} $running={a.running}>{a.icon}</AppButton>
          ))}
        </HostApps>
        <HostTray>
          <TrayButton $width={40} aria-label="Show hidden icons"><Chevron dir="up" size={14} width={1.600} /></TrayButton>
          <TrayButton $width={40} aria-label="Windows Update"><SyncIcon /></TrayButton>
          <TrayButton $width={40} aria-label="OneDrive"><CloudIcon /></TrayButton>
          <TrayButton $width={36} aria-label="Wi-Fi"><WifiIcon /></TrayButton>
          <TrayButton $width={28} aria-label="Volume"><VolumeIcon /></TrayButton>
          <TrayButton $width={32} aria-label="Battery"><BatteryIcon /></TrayButton>
          <HostClock>12:28 PM<br />11/25/2025</HostClock>
        </HostTray>
      </HostTaskbar>
    </Desktop>
  );
}
